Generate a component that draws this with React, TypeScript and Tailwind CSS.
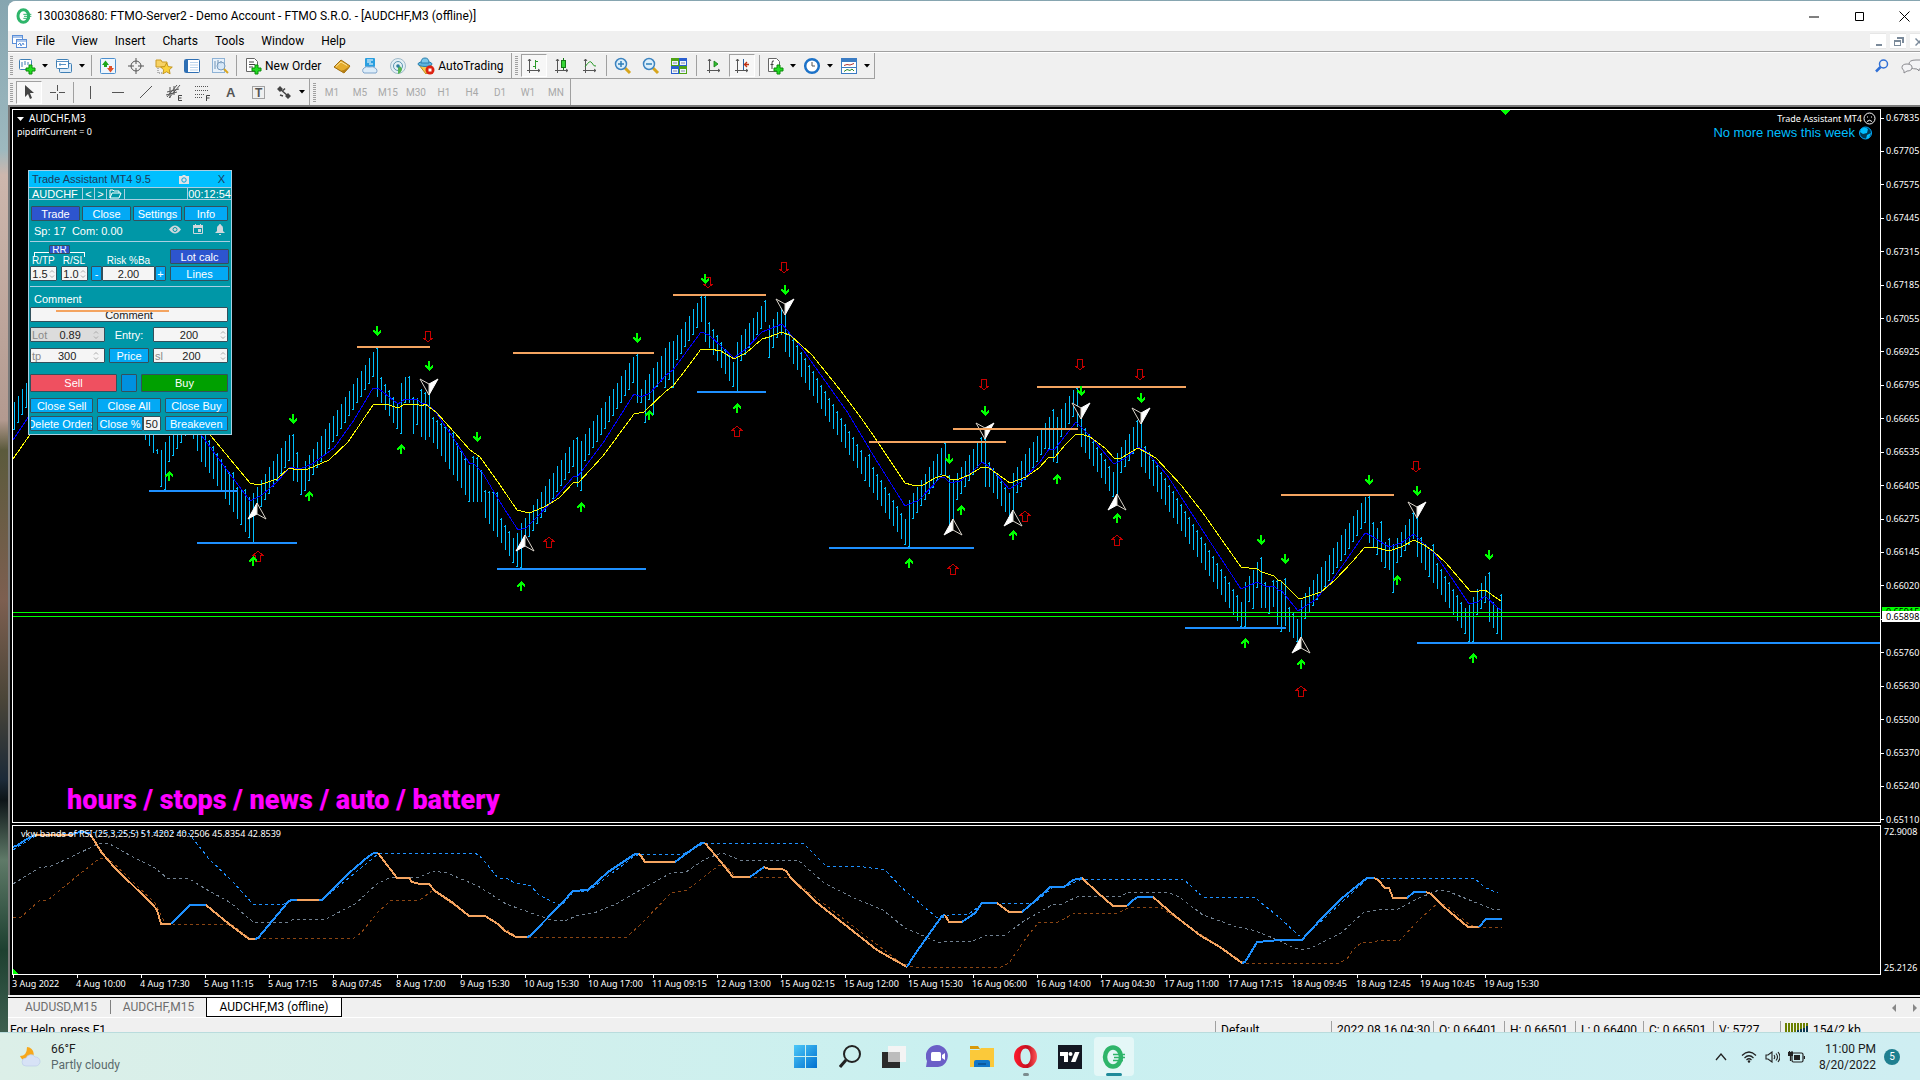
import React from "react";

type Bar = [number, number, number];
type Pt = [number, number];

// Bars are 4px apart; entries in between are interpolated.
const BARS: Bar[] = [
  [14, 402, 430], [26, 383, 408], [78, 300, 326], [134, 392, 418], [145, 415, 440], [149, 421, 446], [153, 427, 453], [157, 449, 454], [161, 450, 487], [165, 442, 490], [169, 436, 462], [177, 423, 449], [185, 410, 436],
  [189, 410, 432], [193, 413, 439], [201, 425, 462], [205, 430, 467], [209, 440, 473], [229, 472, 505], [233, 472, 512], [237, 487, 519], [241, 490, 525], [245, 489, 532], [249, 497, 538], [253, 493, 543], [257, 487, 514], [261, 480, 507],
  [289, 435, 461], [293, 434, 481], [297, 452, 482], [301, 470, 495], [305, 461, 491], [309, 455, 481], [373, 352, 377], [377, 347, 397], [381, 377, 403], [397, 403, 429], [401, 383, 434], [405, 377, 403], [409, 376, 403],
  [413, 397, 434], [417, 398, 425], [421, 389, 437], [425, 392, 440], [429, 393, 437], [433, 417, 443], [453, 432, 475], [457, 443, 481], [469, 465, 502], [473, 456, 502], [477, 457, 502], [481, 470, 502], [485, 490, 518], [497, 492, 537], [501, 518, 543],
  [513, 538, 563], [517, 533, 567], [521, 523, 568], [525, 518, 544], [529, 512, 537], [573, 440, 467], [577, 437, 487], [581, 441, 491], [585, 434, 461], [633, 357, 383], [637, 354, 403], [641, 389, 403], [645, 380, 423],
  [649, 374, 400], [653, 368, 415], [657, 362, 387], [661, 356, 382], [665, 348, 388], [669, 342, 380], [673, 341, 388], [677, 335, 360], [701, 296, 322], [705, 296, 342], [709, 322, 348], [733, 362, 387], [737, 342, 392], [741, 335, 361],
  [765, 300, 322], [769, 325, 358], [773, 319, 348], [777, 312, 338], [781, 306, 335], [785, 306, 352], [789, 332, 357], [865, 457, 481], [869, 454, 487], [873, 467, 493], [905, 519, 545], [909, 500, 547], [913, 493, 519],
  [941, 448, 475], [945, 442, 475], [949, 475, 527], [953, 480, 527], [957, 473, 500], [981, 437, 462], [985, 438, 487], [989, 462, 487], [1009, 493, 518], [1013, 473, 517], [1017, 467, 493], [1045, 423, 449], [1049, 417, 449],
  [1053, 409, 462], [1057, 417, 463], [1061, 409, 437], [1073, 390, 417], [1077, 387, 427], [1081, 417, 447], [1085, 428, 453], [1113, 472, 497], [1117, 453, 497], [1121, 447, 473], [1137, 420, 448], [1141, 420, 467], [1145, 446, 473],
  [1237, 595, 621], [1241, 602, 627], [1245, 582, 627], [1249, 576, 602], [1253, 570, 609], [1257, 562, 588], [1261, 557, 608], [1265, 582, 608], [1269, 587, 614], [1273, 580, 607], [1277, 580, 625], [1281, 581, 632],
  [1285, 578, 626], [1289, 607, 632], [1293, 613, 638], [1297, 619, 642], [1301, 600, 640], [1305, 593, 619], [1365, 497, 523], [1369, 496, 543], [1373, 522, 548], [1377, 528, 555], [1381, 521, 562], [1385, 542, 568],
  [1389, 538, 570], [1393, 544, 593], [1397, 538, 563], [1413, 512, 539], [1417, 517, 557], [1421, 537, 563], [1429, 550, 577], [1433, 544, 583], [1437, 563, 589], [1465, 608, 634], [1469, 605, 642], [1473, 597, 642],
  [1477, 589, 615], [1485, 576, 603], [1489, 572, 622], [1493, 602, 628], [1497, 608, 634], [1501, 594, 640],
];

const YELLOW_A = "13,459 29,436 80,350 170,380";
const YELLOW = "190,412 211,436 250,483 254,484 262,484 277,479 289,468 298,470 308,469 329,460 348,442 373,405 386,404 398,408 405,404 416,404 422,406 425,404 436,412 454,432 470,450 480,457 500,485 517,510 525,512 532,512 546,506 559,498 574,482 578,483 603,456 634,414 644,412 666,391 673,386 687,368 701,349 710,349 721,351 734,359 746,353 762,339 769,337 782,332 791,336 812,355 837,386 859,415 873,435 891,462 905,483 912,485 923,485 935,478 945,475 950,479 959,479 969,475 982,467 989,468 1010,483 1026,477 1039,468 1049,457 1055,457 1065,445 1076,434 1081,434 1090,437 1105,448 1114,458 1121,458 1138,448 1156,458 1181,485 1203,513 1224,543 1241,567 1257,569 1262,572 1274,576 1278,580 1281,581 1298,598 1303,598 1321,592 1335,580 1353,561 1365,547 1374,547 1389,551 1401,547 1414,540 1424,545 1433,551 1446,563 1470,591 1474,592 1485,590 1498,599 1501,601";
const BLUE_A = "13,440 29,416 80,330 150,370";
const BLUE = "185,412 202,436 221,462 250,501 262,495 277,482 290,467 300,469 312,464 334,448 354,420 373,388 379,389 398,404 405,399 417,399 421,403 425,403 434,410 450,433 470,464 473,463 482,472 500,502 518,530 526,528 537,517 555,498 574,476 578,476 603,443 634,394 641,397 650,393 666,375 673,370 701,332 709,335 734,358 746,349 762,332 782,324 801,347 823,378 848,413 873,455 905,506 919,500 941,477 944,477 950,483 960,481 971,473 982,462 991,468 1009,489 1021,482 1040,462 1049,449 1054,450 1076,422 1089,435 1114,464 1126,458 1138,447 1146,451 1167,475 1203,531 1241,589 1257,582 1265,586 1274,586 1278,590 1281,590 1298,611 1315,600 1331,582 1365,533 1370,535 1389,547 1401,543 1414,534 1422,542 1435,554 1453,580 1469,604 1478,602 1485,596 1498,608 1501,610";

const HIGHS: [number, number, number][] = [[357, 430, 347], [513, 654, 353], [673, 766, 295], [869, 1006, 442], [953, 1078, 429], [1037, 1186, 387], [1281, 1394, 495]];
const LOWS: [number, number, number][] = [[149, 238, 491], [197, 297, 543], [497, 646, 569], [697, 766, 392], [829, 974, 548], [1185, 1286, 628], [1417, 2600, 643]];

const GREEN_DOWN: Pt[] = [[293, 419], [377, 331], [429, 366], [477, 437], [637, 338], [705, 279], [785, 290], [949, 459], [985, 411], [1081, 391], [1141, 398], [1261, 540], [1285, 559], [1369, 480], [1417, 491], [1489, 555]];
const GREEN_UP: Pt[] = [[169, 476], [309, 496], [253, 561], [401, 449], [521, 586], [581, 507], [649, 415], [737, 408], [909, 563], [961, 510], [1013, 535], [1057, 479], [1117, 518], [1397, 580], [1245, 643], [1301, 664], [1473, 658]];
const RED_DOWN: Pt[] = [[428, 337], [708, 283], [784, 268], [984, 385], [1080, 365], [1140, 375], [1416, 467]];
const RED_UP: Pt[] = [[258, 556], [549, 542], [737, 431], [953, 569], [1025, 516], [1117, 540], [1301, 691]];
const NAV_DOWN: Pt[] = [[429, 387], [785, 307], [985, 431], [1081, 411], [1141, 416], [1417, 510]];
const NAV_UP: Pt[] = [[257, 511], [525, 543], [953, 527], [1013, 518], [1117, 502], [1301, 645]];

const RSI: [string, string][] = [
  ["b", "13,847 18,845 25,840 35,835"], ["o", "35,835 73,835"], ["b", "73,834 80,832 90,833"],
  ["o", "90,834 102,853 114,867 153,905 157,910 161,924 171,924"], ["b", "171,924 190,905 206,905"],
  ["o", "206,905 229,924 249,939 255,939"], ["b", "255,939 258,938 288,902 291,900 297,900"], ["o", "297,900 319,900"],
  ["b", "319,900 322,900 349,873 369,856 374,853 378,853"],
  ["o", "378,853 397,878 409,878 412,882 420,884 429,884 435,891 453,903 469,916 485,916 498,924 505,931 516,937 527,937"],
  ["b", "527,937 530,936 561,904 573,891 588,890 608,872 635,854 639,854"], ["o", "639,854 641,856 645,862 675,862"],
  ["b", "675,862 683,856 701,843 705,843"], ["o", "705,843 716,856 733,877 750,877"], ["b", "750,877 764,867"],
  ["o", "764,867 769,869 782,869 786,871 791,878 816,902 844,924 877,950 907,967"], ["b", "907,967 913,957 932,930 942,916 945,915"],
  ["o", "945,915 949,922 962,922"], ["b", "962,922 975,913 982,903 997,903"], ["o", "997,903 1009,912 1022,912"],
  ["b", "1022,912 1036,900 1050,887 1064,887 1073,880 1082,878"], ["o", "1082,878 1097,892 1113,906 1127,906"],
  ["b", "1127,906 1133,900 1138,897 1153,897"], ["o", "1153,897 1175,916 1201,936 1220,947 1242,963"],
  ["b", "1242,963 1245,962 1250,954 1257,942 1280,940 1302,940 1307,934 1325,915 1341,899 1358,885 1367,878 1374,878"],
  ["o", "1374,878 1378,880 1385,888 1389,888 1393,898 1407,898"], ["b", "1407,898 1414,892 1426,892"],
  ["o", "1426,892 1431,894 1443,906 1456,917 1468,927 1479,927"], ["b", "1479,927 1486,919 1502,919"],
];
const BAND_UP = "13,850 35,836 90,832 188,832 194,840 209,859 233,882 253,904 282,905 291,901 322,900 378,854 475,853 482,858 498,878 506,878 515,883 531,886 539,895 561,906 573,892 588,891 635,856 640,854 683,854 705,843 803,843 826,866 864,867 885,870 901,887 936,917 944,918 949,915 969,914 983,903 1034,903 1052,888 1064,887 1082,879 1183,879 1203,897 1254,897 1280,918 1298,935 1303,938 1368,878 1474,878 1484,887 1498,893";
const BAND_MID = "13,884 39,868 51,866 67,859 100,843 108,843 131,856 155,868 167,878 188,878 204,888 231,903 253,922 288,922 294,919 326,919 355,904 378,883 392,877 420,877 433,871 447,873 478,886 506,904 551,920 565,921 576,916 594,913 616,904 642,889 671,873 686,872 705,859 722,853 740,860 798,860 824,883 856,899 883,910 905,928 940,943 948,941 973,941 987,935 1005,935 1024,921 1052,905 1062,904 1079,896 1122,896 1128,892 1167,892 1179,897 1203,915 1234,926 1256,931 1280,941 1292,947 1302,950 1311,948 1341,933 1364,912 1378,910 1398,909 1419,898 1439,890 1447,891 1492,909 1502,909";
const BAND_LOW = "13,917 21,917 39,901 48,900 76,877 100,858 108,858 155,903 165,923 173,924 231,924 249,938 353,939 361,933 378,912 390,901 420,900 433,890 469,916 485,916 518,937 627,937 642,923 671,893 687,890 718,866 724,864 736,877 789,877 901,963 913,967 1001,967 1009,963 1026,938 1038,923 1058,922 1075,913 1118,913 1130,907 1160,907 1244,963 1339,963 1347,959 1353,950 1362,942 1374,942 1380,940 1400,940 1419,920 1439,902 1447,906 1470,925 1476,927 1502,927";

function barPath(): string {
  let d = "";
  for (let i = 0; i < BARS.length; i++) {
    const [x0, t0, b0] = BARS[i];
    const next = BARS[i + 1];
    const steps = next ? Math.max(1, Math.round((next[0] - x0) / 4)) : 1;
    const rising = next ? next[1] < t0 : false;
    for (let s = 0; s < steps; s++) {
      const k = s / steps;
      const x = Math.round(x0 + (next ? (next[0] - x0) * k : 0));
      const t = Math.round(t0 + (next ? (next[1] - t0) * k : 0));
      const b = Math.round(b0 + (next ? (next[2] - b0) * k : 0));
      d += `M${x}.5 ${t}V${b}M${x - 1} ${(rising ? b - 1 : t + 1)}.5h1`;
    }
  }
  return d;
}

// An empty entry leaves its place to the current-price tags.
const PRICES = ["0.67835", "0.67705", "0.67575", "0.67445", "0.67315", "0.67185", "0.67055", "0.66925", "0.66795", "0.66665", "0.66535", "0.66405", "0.66275", "0.66145", "0.66020", "", "0.65760", "0.65630", "0.65500", "0.65370", "0.65240", "0.65110"];
const DATES = ["3 Aug 2022", "4 Aug 10:00", "4 Aug 17:30", "5 Aug 11:15", "5 Aug 17:15", "8 Aug 07:45", "8 Aug 17:00", "9 Aug 15:30", "10 Aug 15:30", "10 Aug 17:00", "11 Aug 09:15", "12 Aug 13:00", "15 Aug 02:15", "15 Aug 12:00", "15 Aug 15:30", "16 Aug 06:00", "16 Aug 14:00", "17 Aug 04:30", "17 Aug 11:00", "17 Aug 17:15", "18 Aug 09:45", "18 Aug 12:45", "19 Aug 10:45", "19 Aug 15:30"];

function MainPlot() {
  return (
    <svg className="absolute inset-0 h-full w-full" shapeRendering="crispEdges" aria-label="AUDCHF price chart">
      <defs>
        <path id="gup" d="M0 -5L4 -1V1H3L1 -1V5H-1V-1L-3 1H-4V-1Z" fill="#0f0" />
        <path id="rup" d="M0 -5L4.500 -1H2.500V5.500H-2.500V-1H-4.500Z" fill="none" stroke="#c80000" strokeWidth="1" />
        <g id="nav" shapeRendering="auto">
          <path d="M0 -8L-9 8L0 3Z" fill="#fff" stroke="#fff" strokeWidth="1" />
          <path d="M0 -8L9 8L0 3Z" fill="#000" stroke="#dcd6cc" strokeWidth="1" />
        </g>
      </defs>
      <g transform="translate(-13 -110)">
        <path d={barPath()} stroke="#00bfff" strokeWidth="1" fill="none" />
        {[BLUE_A, BLUE].map((p) => <polyline key={p} points={p} stroke="#0000ff" fill="none" />)}
        {[YELLOW_A, YELLOW].map((p) => <polyline key={p} points={p} stroke="#ffff00" fill="none" />)}
        <path d="M13 612.500H2600M13 616.500H2600" stroke="#00ff00" />
        {HIGHS.map(([a, b, y]) => <path key={a} d={`M${a} ${y}H${b}`} stroke="#f4a460" strokeWidth="2" />)}
        {LOWS.map(([a, b, y]) => <path key={a} d={`M${a} ${y}H${b}`} stroke="#1e90ff" strokeWidth="2" />)}
        {RED_UP.map(([x, y]) => <use key={x} href="#rup" x={x} y={y} />)}
        {RED_DOWN.map(([x, y]) => <use key={x} href="#rup" transform={`translate(${x} ${y}) rotate(180)`} />)}
        {NAV_UP.map(([x, y]) => <use key={x} href="#nav" x={x} y={y} />)}
        {NAV_DOWN.map(([x, y]) => <use key={x} href="#nav" transform={`translate(${x} ${y}) rotate(180)`} />)}
        {GREEN_UP.map(([x, y]) => <use key={x} href="#gup" x={x} y={y} />)}
        {GREEN_DOWN.map(([x, y]) => <use key={x} href="#gup" transform={`translate(${x} ${y}) rotate(180)`} />)}
        <path d="M953 429H1078" stroke="#f4a460" strokeWidth="2" />
        <path d="M1500 110h10l-5 5z" fill="#0f0" />
      </g>
    </svg>
  );
}

function RsiPlot() {
  return (
    <svg className="absolute inset-0 h-full w-full" shapeRendering="crispEdges" aria-label="RSI bands">
      <g transform="translate(-13 -826)" fill="none">
        <polyline points={BAND_UP} stroke="#1e90ff" strokeDasharray="3 3" />
        <polyline points={BAND_MID} stroke="#708090" strokeDasharray="3 3" />
        <polyline points={BAND_LOW} stroke="#8b4513" strokeDasharray="3 3" />
        {RSI.map(([c, p]) => <polyline key={p} points={p} strokeWidth="2" stroke={c === "b" ? "#1e90ff" : "#f4a460"} />)}
        <path d="M13 969v5h5z" fill="#0f0" />
      </g>
    </svg>
  );
}

const Svg = ({ children, w = 18, h = 18 }: { children: React.ReactNode; w?: number; h?: number }) => (
  <svg width={w} height={h} viewBox={`0 0 ${w} ${h}`} fill="none" aria-hidden="true" className="shrink-0">{children}</svg>
);

const Plus = () => <path d="M9.500 6.500h3v3h3v3h-3v3h-3v-3h-3v-3h3z" fill="#22dd22" stroke="#0a8a0a" transform="translate(1.500 1.500)" />;
const Axes = () => <path d="M4.500 2v14M2 13.500h13M3 4l1.500-2L6 4M13 12l2 1.500-2 1.500" stroke="#555" />;

const IC: Record<string, React.ReactNode> = {
  newchart: <Svg><rect x="1.500" y="2.500" width="12" height="10" rx="1" fill="#fff" stroke="#3f7fb5" /><path d="M4 5v5M7 4v4M10 5v3" stroke="#3f7fb5" /><Plus /></Svg>,
  profiles: <Svg><rect x="4.500" y="6.500" width="12" height="9" rx="1" fill="#dcebf8" stroke="#3f7fb5" /><rect x="1.500" y="2.500" width="12" height="9" rx="1" fill="#fff" stroke="#3f7fb5" /><path d="M2 4.500h11M4 7.500h7M5 6v3" stroke="#5b93c5" /></Svg>,
  market: <Svg><rect x="1.500" y="1.500" width="15" height="15" rx="1" fill="#eef6fd" stroke="#4c8fce" /><path d="M3 8l3.500-4.500L10 8H8v2H5V8z" fill="#1ca81c" /><path d="M8 11l3.500 4.500L15 11h-2V9h-3v2z" fill="#e0502a" /></Svg>,
  cross: <Svg><circle cx="9" cy="9" r="5" stroke="#555" /><path d="M9 1v6M9 11v6M1 9h6M11 9h6" stroke="#555" /></Svg>,
  navigator: <Svg><path d="M1 3h5l1 2h5v5H1z" fill="#f7d264" stroke="#c99a22" /><path d="M3 11v5h5" stroke="#777" strokeDasharray="1 1" /><path d="M11.500 6l1.800 3.600 4 .5-3 2.700.8 4-3.600-2-3.600 2 .8-4-3-2.700 4-.5z" fill="#fbd23c" stroke="#b8860b" strokeWidth=".8" /></Svg>,
  terminal: <Svg><rect x="1.500" y="2.500" width="15" height="13" rx="1" fill="#fff" stroke="#2f6fb3" /><path d="M2 3h3v12H2z" fill="#2f6fb3" /><path d="M7 5.500h8M7 8h8M7 10.500h8M7 13h8" stroke="#b9d3ec" /></Svg>,
  tester: <Svg><rect x="1.500" y="1.500" width="12" height="14" fill="#e8f1fa" stroke="#8fb3d6" /><path d="M4 4v8M7 3v7M10 4v3" stroke="#6f93b5" /><circle cx="10" cy="9" r="4" fill="#cfe4f7aa" stroke="#7a9cbd" /><path d="M13 12l4 4" stroke="#d9a520" strokeWidth="2" /></Svg>,
  order: <Svg><path d="M2.500 1.500h8l3 3v10h-11z" fill="#fff" stroke="#666" /><path d="M5 5h5M5 7.500h6M5 10h4" stroke="#444" /><Plus /></Svg>,
  gold: <Svg><path d="M1 10L8 3l9 6-6 7z" fill="#e5ac2c" stroke="#9c6b10" /><path d="M1 10l6 4 4-1 6-4-1 2-5 5z" fill="#b57f16" /><path d="M3 9.500L8 5l6 3.500" stroke="#fbe39a" /></Svg>,
  community: <Svg><rect x="4" y="1" width="10" height="9" rx="1" fill="#2a9fe0" /><path d="M6 3h6M6 5h4M8 7h4" stroke="#fff" /><path d="M3 16a3 3 0 010-5q2-2 5-1 5-1 6 1a3 3 0 011 5z" fill="#dcecf9" stroke="#7fa5cc" /></Svg>,
  signal: <Svg><circle cx="9" cy="9" r="7.500" stroke="#9fb9c9" fill="#e4f0f5" /><circle cx="9" cy="9" r="4.500" stroke="#5b94b0" /><path d="M9 9a4 4 0 014 4q-1 3-4 4z" fill="#55b555" /><circle cx="9" cy="9" r="1.800" fill="#2f7f9f" /></Svg>,
  auto: <Svg><path d="M2 8l7 9 6-8z" fill="#f5c84c" stroke="#bf8f1a" /><ellipse cx="8" cy="7" rx="7" ry="2.500" fill="#5db3dd" stroke="#2a7fae" /><path d="M4 6q0-5 4-5t4 5z" fill="#7cc7ea" stroke="#2a7fae" /><circle cx="13" cy="13" r="4.500" fill="#dd2211" /><rect x="11.500" y="11.500" width="3" height="3" fill="#fff" /></Svg>,
  bars: <Svg><Axes /><path d="M10.500 3v9M8 9.500h2M11 4.500h2" stroke="#2a9a2a" /></Svg>,
  candles: <Svg><Axes /><path d="M10.500 1v12" stroke="#157a15" /><rect x="8.500" y="3.500" width="4" height="7" fill="#35d435" stroke="#157a15" /></Svg>,
  line: <Svg><Axes /><path d="M4 10q5-8 7-4t4 3" stroke="#2a9a2a" /></Svg>,
  zin: <Svg><path d="M11 11l5 5" stroke="#d7a51d" strokeWidth="3" /><circle cx="7" cy="7" r="5.500" fill="#dceffb" stroke="#3d84c0" strokeWidth="1.500" /><path d="M4 7h6M7 4v6" stroke="#2f7fb8" strokeWidth="1.500" /></Svg>,
  zout: <Svg><path d="M11 11l5 5" stroke="#d7a51d" strokeWidth="3" /><circle cx="7" cy="7" r="5.500" fill="#dceffb" stroke="#3d84c0" strokeWidth="1.500" /><path d="M4 7h6" stroke="#2f7fb8" strokeWidth="1.500" /></Svg>,
  tile: <Svg><path d="M1 1h8v8H1zM9 9h8v8H9z" fill="#4fa314" /><path d="M9 1h8v8H9zM1 9h8v8H1z" fill="#2a5fd0" /><path d="M2 4h6v4H2zM10 4h6v4h-6zM2 12h6v4H2zM10 12h6v4h-6z" fill="#eef5fb" /><path d="M3 6h4M11 6h4M3 14h4M11 14h4" stroke="#88a" /></Svg>,
  scroll: <Svg><Axes /><path d="M9 4l4 3-4 3z" fill="#2fbf2f" stroke="#157a15" strokeWidth=".8" /></Svg>,
  shift: <Svg><Axes /><path d="M10.500 2v11" stroke="#2a5f9f" /><path d="M16 7.500h-4M14 5l-2.500 2.500L14 10" stroke="#c03010" strokeWidth="1.300" /></Svg>,
  indic: <Svg><path d="M2.500 1.500h8l3 3v10h-11z" fill="#fff" stroke="#666" /><path d="M8 4q-2-1-2 2v6M4.500 7.500h3" stroke="#444" /><Plus /></Svg>,
  clock: <Svg><circle cx="9" cy="9" r="6.800" fill="#fff" stroke="#1c72c8" strokeWidth="2.500" /><path d="M9 5v4h3" stroke="#555" /></Svg>,
  tmpl: <Svg><rect x="1.500" y="1.500" width="15" height="15" fill="#fff" stroke="#3b7cc4" /><path d="M2 2h14v3H2z" fill="#3b7cc4" /><path d="M2 10.500h14" stroke="#3b7cc4" /><path d="M4 8.500l3-1 3 .5 4-1.500" stroke="#a33" /><path d="M4 14.500l3-2 3 1 2-1.500 2 2" stroke="#2a8a2a" /></Svg>,
  cursor: <Svg><path d="M5 2v12l3-3 2 5 2-1-2-5h4z" fill="#444" /></Svg>,
  cross2: <Svg><path d="M9.500 2v6M9.500 11v6M2 9.500h6M11 9.500h6" stroke="#555" /></Svg>,
  vline: <Svg><path d="M9.500 3v13" stroke="#555" /></Svg>,
  hline: <Svg><path d="M3 9.500h12" stroke="#555" /></Svg>,
  trend: <Svg><path d="M3 15L15 3" stroke="#555" /></Svg>,
  chan: <Svg><path d="M2 14L12 2M4 15L15 2M2 9l12-3M1 12l11-3M5 4v11M9 3v9" stroke="#555" /><path d="M17 12.500h-3.500v5H17M13.500 15H16.500" stroke="#444" /></Svg>,
  fibo: <Svg><path d="M2 3.500h13M2 7.500h13M2 11.500h9M2 14.500h8" stroke="#555" strokeDasharray="1 1" /><path d="M17 12.500h-3.500V18M13.500 15H16.500" stroke="#444" /></Svg>,
  texta: <Svg><text x="5" y="14" fontSize="13" fontFamily="Liberation Sans" fontWeight="bold" fill="#555">A</text></Svg>,
  label: <Svg><rect x="3.500" y="3.500" width="12" height="12" stroke="#555" strokeDasharray="1 1" /><text x="6" y="14" fontSize="12" fontFamily="Liberation Sans" fontWeight="bold" fill="#555">T</text></Svg>,
  shapes: <Svg><path d="M5 3l3 3-3 3-3-3zM13 10l3 3-3 3-3-3z" fill="#444" /><path d="M5 6l8 7M8 13l-3-1M10 5.500l-2 2" stroke="#444" strokeWidth="1.500" /></Svg>,
};

function Tool({ icon, name, drop, active, text }: { icon: string; name: string; drop?: boolean; active?: boolean; text?: string }) {
  return (
    <button
      aria-label={name}
      className={
        "flex h-[23px] shrink-0 items-center justify-center " +
        (text ? "gap-[3px] pl-[5px] pr-[7px] font-['Roboto',sans-serif] text-[12px] leading-4 text-black " : drop ? "w-[37px] gap-0.5 " : active ? "w-[26px] border border-[#a0a0a0] border-r-white border-b-white bg-[#f7f7f7] mx-px " : "w-7 ")
      }
    >
      {IC[icon]}
      {text}
      {drop && <svg width="7" height="4" aria-hidden="true" className="ml-1"><path d="M0 0h6L3 3.500z" /></svg>}
    </button>
  );
}
const Sep = ({ wide }: { wide?: boolean }) => <div className={(wide ? "mx-[3px]" : "mx-[2px]") + " h-[21px] w-px shrink-0 bg-[#a0a0a0]"} />;
const Grip = () => <div className="mx-[2px] h-[19px] w-[3px] shrink-0 bg-[repeating-linear-gradient(#a0a0a0_0_1px,#f0f0f0_1px_2px)]" />;

const PB = "flex items-center justify-center overflow-hidden whitespace-nowrap rounded-[1px] border border-[#33505c] text-white";

function Field({ label, value, className, tag, spin = true, gray }: { label: string; value: string; className: string; tag?: string; spin?: boolean; gray?: boolean }) {
  return (
    <label className={"flex h-[15px] items-center rounded-[1px] border border-[#33505c] " + (gray ? "bg-[#dcdcdc] " : "bg-[#f5f5f5] ") + className}>
      {tag && <span className="pl-px text-[#8a8a8a]">{tag}</span>}
      <input aria-label={label} defaultValue={value} className="w-0 min-w-0 flex-1 bg-transparent text-center text-[#222] outline-none" />
      {spin && <svg width="6" height="10" viewBox="0 0 6 10" fill="none" stroke="#aaa" className="mr-px shrink-0" aria-hidden="true"><path d="M1 3.500L3 1.500l2 2M1 6.500l2 2 2-2" /></svg>}
    </label>
  );
}

function TradePanel() {
  return (
    <section className="absolute left-[15px] top-[60px] flex w-[204px] flex-col border border-[#a9cfe2] bg-[#0097a7] font-['Liberation_Sans',Arial,sans-serif] text-[11px] leading-[12px] text-white">
      <header className="flex h-4 items-center bg-[#00bfff] pl-[3px] pr-[6px] text-[#1c3a5a]">
        <h2>Trade Assistant MT4 9.5</h2>
        <svg width="10" height="9" viewBox="0 0 10 9" className="ml-auto mr-[29px]" aria-hidden="true"><path d="M0 1h3l1-1h2l1 1h3v8H0z" fill="#dfe3e6" /><circle cx="5" cy="5" r="2.200" fill="#dfe3e6" stroke="#00a5e0" /></svg>
        <button aria-label="Close panel">X</button>
      </header>
      <div className="flex h-[13px] items-center border-y border-[#a9cfe2]">
        <span className="w-[53px] pl-[3px]">AUDCHF</span>
        <button className="w-3 border-l border-[#a9cfe2]">&lt;</button>
        <button className="w-3 border-l border-[#a9cfe2]">&gt;</button>
        <button aria-label="Open" className="flex w-[19px] justify-center border-x border-[#a9cfe2]"><svg width="13" height="10" viewBox="0 0 13 10" fill="none" stroke="#fff" aria-hidden="true"><path d="M1 9V1h3l1 1h5v2M1 9l2-5h9L10 9z" /></svg></button>
        <span className="ml-auto border-l border-[#a9cfe2]">00:12:54</span>
      </div>
      <div className="mt-1.5 flex gap-[2px] pl-[2px] pr-[3px]">
        <button className={PB + " h-[15px] flex-1 bg-[#2d55cf]"}>Trade</button>
        <button className={PB + " h-[15px] flex-1 bg-[#03a9f4]"}>Close</button>
        <button className={PB + " h-[15px] flex-1 bg-[#03a9f4]"}>Settings</button>
        <button className={PB + " h-[15px] w-11 bg-[#03a9f4]"}>Info</button>
      </div>
      <div className="mx-px flex h-[21px] items-center border-b border-[#a9cfe2] px-1">
        <span className="whitespace-pre">Sp: 17  Com: 0.00</span>
        <span className="ml-auto mb-1 flex items-center gap-3 pr-px">
          <svg width="12" height="9" viewBox="0 0 12 9" aria-hidden="true"><path d="M0 4.500Q6-3.500 12 4.500 6 12.500 0 4.500z" fill="#cfd8dc" /><circle cx="6" cy="4.500" r="2" fill="#cfd8dc" stroke="#0097a7" /></svg>
          <svg width="10" height="10" viewBox="0 0 10 10" aria-hidden="true"><path d="M.500 1.500h9v8h-9z" fill="none" stroke="#cfd8dc" /><path d="M0 1h10v3H0zM2 0h1v2H2zM7 0h1v2H7zM5 5h3v3H5z" fill="#cfd8dc" /></svg>
          <svg width="10" height="11" viewBox="0 0 10 11" aria-hidden="true"><path d="M5 0q1 0 1 1 2 1 2 3v3l2 2H0l2-2V4q0-2 2-3 0-1 1-1zM4 10h2v1H4z" fill="#cfd8dc" /></svg>
        </span>
      </div>
      <div className="mx-px flex h-[45px] border-b border-[#a9cfe2] pr-px pt-[3px]">
        <div className="w-[59px] shrink-0">
          <div className="mx-1 flex h-[9px] items-center">
            <i className="mt-[9px] h-[5px] flex-1 border-l border-t border-white" />
            <button className="h-[9px] overflow-hidden rounded-[1px] border border-[#33505c] bg-[#2d55cf] px-[2px] text-[10px] leading-[8px]">RR</button>
            <i className="mt-[9px] h-[5px] flex-1 border-r border-t border-white" />
          </div>
          <div className="flex h-3 justify-between pl-[2px] pr-1 pt-px text-[10px] leading-[11px]"><span>R/TP</span><span>R/SL</span></div>
          <div className="flex gap-1"><Field label="R/TP" value="1.5" className="w-[27px]" /><Field label="R/SL" value="1.0" className="w-[27px]" /></div>
        </div>
        <div className="ml-[2px] flex w-[75px] flex-col justify-end pb-[5px] text-[10px]">
          <span className="h-3 pt-px text-center leading-[11px]">Risk %Ba</span>
          <div className="flex text-[11px]">
            <button className={PB + " h-[15px] w-[11px] bg-[#03a9f4]"}>-</button>
            <Field label="Risk" value="2.00" spin={false} className="min-w-0 flex-1" />
            <button className={PB + " h-[15px] w-[11px] bg-[#03a9f4]"}>+</button>
          </div>
        </div>
        <div className="ml-1 flex flex-1 flex-col gap-[2px] pt-1">
          <button className={PB + " h-[15px] bg-[#2d55cf]"}>Lot calc</button>
          <button className={PB + " h-[15px] bg-[#03a9f4]"}>Lines</button>
        </div>
      </div>
      <div className="flex flex-col pb-[3px] pl-px pr-[3px] pt-1.5">
        <span className="h-[14px] pl-1 text-[11px]">Comment</span>
        <div className="relative flex">
          <Field label="Comment" value="Comment" spin={false} className="flex-1" />
          <i className="absolute left-[26px] top-[3px] h-[2px] w-[113px] bg-[#f4a460]" />
        </div>
        <div className="mt-[5px] grid grid-cols-[75px_1fr_75px] items-center gap-x-1 gap-y-1.5">
          <Field label="Lot" tag="Lot" value="0.89" gray className="pr-1" />
          <span className="text-center">Entry:</span>
          <Field label="Entry" value="200" className="pl-1" />
          <Field label="Take profit" tag="tp" value="300" className="pr-1" />
          <button className={PB + " h-[15px] bg-[#03a9f4]"}>Price</button>
          <Field label="Stop loss" tag="sl" value="200" className="" />
        </div>
        <div className="mt-[11px] flex gap-1">
          <button className={PB + " h-[18px] flex-1 bg-[#ef5060]"}>Sell</button>
          <button aria-label="Pending order" className={PB + " h-[18px] w-4 bg-[#0091e0]"} />
          <button className={PB + " h-[18px] flex-1 bg-[#00a000]"}>Buy</button>
        </div>
        <div className="mt-1.5 grid grid-cols-3 gap-x-1 gap-y-[3px]">
          <button className={PB + " h-[15px] bg-[#03a9f4]"}>Close Sell</button>
          <button className={PB + " h-[15px] bg-[#03a9f4]"}>Close All</button>
          <button className={PB + " h-[15px] bg-[#03a9f4]"}>Close Buy</button>
          <button className={PB + " h-[15px] bg-[#03a9f4]"}>Delete Orders</button>
          <div className="flex">
            <button className={PB + " h-[15px] flex-1 bg-[#03a9f4]"}>Close %</button>
            <Field label="Close percent" value="50" spin={false} className="w-[18px]" />
          </div>
          <button className={PB + " h-[15px] bg-[#03a9f4]"}>Breakeven</button>
        </div>
      </div>
    </section>
  );
}

const FtmoIcon = ({ s }: { s: number }) => (
  <svg width={s} height={s} viewBox="0 0 24 24" fill="none" aria-hidden="true">
    <ellipse cx="11" cy="12" rx="8" ry="9.500" stroke="#2eb56a" strokeWidth="4.500" />
    <path d="M11 9.500h12M12 12.500h11M11 15.500h10" stroke="#2eb56a" strokeWidth="1.500" />
    <path d="M19 7v10" stroke="#2eb56a" strokeWidth="2" />
  </svg>
);

function Taskbar() {
  const cell = "relative flex h-[39px] w-10 items-center justify-center rounded";
  return (
    <footer className="relative z-10 flex h-12 shrink-0 items-center border-t border-[#b9dcdd] bg-linear-to-r from-[#dcefe8] via-[#c9f0f0] to-[#cfeef2] font-['Roboto','Open_Sans',sans-serif] text-[12px] leading-4 text-[#1b1b1b]">
      <div className="flex flex-1 items-center gap-2.5 pl-[19px]">
        <svg width="22" height="22" viewBox="0 0 22 22" aria-hidden="true">
          <path d="M8 1a7 7 0 11-7 9q7 0 7-9z" fill="#f7a81b" />
          <path d="M7 20a4 4 0 010-8 5 5 0 019-1 4.500 4.500 0 011 9z" fill="#d7e2f6" stroke="#b8c9ea" strokeWidth=".6" />
        </svg>
        <p>66°F<br /><span className="text-[#5a6a6c]">Partly cloudy</span></p>
      </div>
      <nav className="flex gap-1">
        <button aria-label="Start" className={cell}><svg width="23" height="23" viewBox="0 0 23 23"><defs><linearGradient id="w" x2="1" y2="1"><stop stopColor="#4cc8f8" /><stop offset="1" stopColor="#0070d0" /></linearGradient></defs><path d="M0 0h11v11H0zM12 0h11v11H12zM0 12h11v11H0zM12 12h11v11H12z" fill="url(#w)" /></svg></button>
        <button aria-label="Search" className={cell}><svg width="22" height="23" viewBox="0 0 22 23" fill="none" stroke="#222" strokeWidth="2"><circle cx="13" cy="9" r="8" /><path d="M7 15l-6 7" strokeWidth="3" /></svg></button>
        <button aria-label="Task view" className={cell}><svg width="24" height="22" viewBox="0 0 24 22"><path d="M0 6h18v16H0z" fill="#2b2b2b" /><path d="M6 0h18v16H6z" fill="#f4f4f4" /><path d="M6 6h12v10H6z" fill="#bdbdbd" /></svg></button>
        <button aria-label="Chat" className={cell}><svg width="24" height="23" viewBox="0 0 24 23"><path d="M0 22l1-6A11 11 0 1112 22z" fill="#6b5fc7" /><rect x="5" y="7" width="10" height="9" rx="1.500" fill="#fff" /><path d="M16 10l3-2v7l-3-2z" fill="#fff" /></svg></button>
        <button aria-label="File Explorer" className={cell}><svg width="24" height="22" viewBox="0 0 24 22"><path d="M0 0h8l2 3H0z" fill="#d99a0a" /><path d="M0 4h9l2-2h13v19H0z" fill="#fbc93a" /><path d="M4 21v-5q0-2 2-2h12q2 0 2 2v5z" fill="#1277c9" /><path d="M8 18h8" stroke="#0a4f8f" strokeWidth="1.500" /></svg></button>
        <button aria-label="Opera" className={cell}><svg width="23" height="23" viewBox="0 0 23 23"><defs><linearGradient id="o" x2="1"><stop stopColor="#ff1b2d" /><stop offset=".6" stopColor="#c40d1e" /><stop offset="1" stopColor="#ff5a5a" /></linearGradient></defs><path fillRule="evenodd" d="M11.500 0a11.500 11.500 0 100 23 11.500 11.500 0 000-23zm0 3.500c3 0 5 3.500 5 8s-2 8-5 8-5-3.500-5-8 2-8 5-8z" fill="url(#o)" /></svg><i className="absolute bottom-0 h-[3px] w-1.5 rounded-full bg-[#7b8c8e]" /></button>
        <button aria-label="TradingView" className={cell}><svg width="24" height="24" viewBox="0 0 24 24"><path d="M0 0h24v24H0z" fill="#131722" /><path d="M2 7h8v10H6v-6H2z" fill="#fff" /><circle cx="12.500" cy="9" r="2" fill="#fff" /><path d="M17 7h4.500l-4 10H13z" fill="#fff" /></svg></button>
        <button aria-label="FTMO MT4" className={cell + " bg-[#e4f7f7]"}><FtmoIcon s={24} /><i className="absolute bottom-0 h-[3px] w-4 rounded-full bg-[#1f8a9a]" /></button>
      </nav>
      <div className="flex flex-1 items-center justify-end gap-2 pr-5">
        <button aria-label="Hidden icons"><svg width="12" height="8" viewBox="0 0 12 8" fill="none" stroke="#222" strokeWidth="1.300"><path d="M1 7l5-6 5 6" /></svg></button>
        <button aria-label="Network and sound" className="ml-1.5 flex items-center gap-2">
          <svg width="16" height="12" viewBox="0 0 16 12" fill="none" stroke="#222" strokeWidth="1.200"><path d="M1 4.500q7-7 14 0M3.500 7q4.500-4.500 9 0M5.500 9q2.500-2.500 5 0" /><circle cx="8" cy="10.500" r="1.200" fill="#222" stroke="none" /></svg>
          <svg width="15" height="12" viewBox="0 0 15 12" fill="none" stroke="#222" strokeWidth="1.100"><path d="M1 4h2l4-3v10L3 8H1zM9 4q1.500 2 0 4M11 2.500q3 3.500 0 7M13 1q4 5 0 10" /></svg>
          <svg width="17" height="12" viewBox="0 0 17 12" fill="none" stroke="#222" strokeWidth="1.200"><rect x="4" y="2" width="11" height="9" rx="1.500" /><path d="M6 4h6v5H6zM0 1h5v4H0z" fill="#222" stroke="none" /><path d="M1.500 0v2M4 0v2M2.500 5v5M16.400 5v3" /></svg>
        </button>
        <p className="ml-1.5 text-right">11:00 PM<br />8/20/2022</p>
        <span className="flex size-4 items-center justify-center rounded-full bg-[#1f7f90] text-[10px] text-white">5</span>
      </div>
    </footer>
  );
}

const STATUS: [string, string][] = [["Default", "w-[116px]"], ["2022.08.16 04:30", "w-[102px]"], ["O: 0.66401", "w-[71px]"], ["H: 0.66501", "w-[71px]"], ["L: 0.66400", "w-[68px]"], ["C: 0.66501", "w-[70px]"], ["V: 5727", "w-[67px]"]];

export default function App() {
  return (
    <div className="flex h-screen flex-col overflow-hidden bg-[linear-gradient(#86a5b0_0,#9db9bf_150px,#cdb7ad_175px,#b39a90_420px,#5b5a3c_450px,#7d5f50_600px,#4a4538_700px,#1c2a38_780px,#0d1518_800px,#5f7a68_860px,#1d4030_950px,#3f6050_1032px)] font-['Roboto','Open_Sans',sans-serif] text-black">
      <div className="ml-2 mt-px flex min-h-0 flex-1 flex-col overflow-hidden rounded-tl-lg bg-[#f0f0f0]">
        <header className="flex h-[30px] shrink-0 items-center bg-white pl-2">
          <FtmoIcon s={16} />
          <h1 className="ml-[5px] text-[12px]">1300308680: FTMO-Server2 - Demo Account - FTMO S.R.O. - [AUDCHF,M3 (offline)]</h1>
          <div className="ml-auto flex">
            {["M0 6h10", "M1.500 1.500h8v8h-8z", "M0.500 0.500l10 10M10.500 0.500l-10 10"].map((d, i) => (
              <button key={d} aria-label={["Minimize", "Maximize", "Close"][i]} className={i === 2 ? "flex w-[38px] justify-start pl-[17px]" : "flex w-[45px] justify-center"}>
                <svg width="11" height="11" viewBox="0 0 11 11" fill="none" stroke="#000"><path d={d} /></svg>
              </button>
            ))}
          </div>
        </header>
        <nav className="flex h-[21px] shrink-0 items-center gap-px border-b border-[#a0a0a0] pl-1">
          <svg width="15" height="15" viewBox="0 0 15 15" fill="none" stroke="#5b8fd8" aria-hidden="true"><rect x=".5" y="1.500" width="10" height="8" fill="#fff" /><path d="M1 3h9" /><rect x="4.500" y="5.500" width="10" height="8" fill="#fff" /><path d="M5 7h9M6 11l2-2 1 3 2-3 1 2" /></svg>
          {["File", "View", "Insert", "Charts", "Tools", "Window", "Help"].map((m) => (
            <button key={m} className="px-2 text-[12px] leading-4">{m}</button>
          ))}
          <div className="ml-auto flex gap-1">
            {["M3 8h6v2H3z", "M1 4h7v6H1zM2 6v3h5V6zM4 1h7v6H9V3H4z", "M2 2l3 3 3-3 1 1-3 3 3 3-1 1-3-3-3 3-1-1 3-3-3-3z"].map((d, i) => (
              <button key={d} aria-label={["Minimize chart", "Restore chart", "Close chart"][i]} className={(i === 2 ? "w-[10px] justify-start pl-1 " : "w-4 justify-center ") + "flex h-4 items-center overflow-hidden border-y border-[#e6e6e6] bg-white"}>
                <svg width="11" height="11" viewBox="0 0 11 11" fill="#7b8a9a" fillRule="evenodd" className="shrink-0"><path d={d} /></svg>
              </button>
            ))}
          </div>
        </nav>
        <div className="flex h-[27px] shrink-0 items-center border-t border-white">
          <div className="flex h-full items-center border-b border-r border-[#a0a0a0]">
            <Grip />
            <Tool icon="newchart" name="New chart" drop />
            <Tool icon="profiles" name="Profiles" drop />
            <Sep />
            <Tool icon="market" name="Market watch" />
            <Tool icon="cross" name="Data window" />
            <Tool icon="navigator" name="Navigator" />
            <Tool icon="terminal" name="Terminal" />
            <Tool icon="tester" name="Strategy tester" />
            <Sep />
            <Tool icon="order" name="New Order" text="New Order" />
            <Tool icon="gold" name="MetaEditor" />
            <Tool icon="community" name="Community" />
            <Tool icon="signal" name="Signals" />
            <Tool icon="auto" name="AutoTrading" text="AutoTrading" />
          </div>
          <div className="flex h-full items-center border-b border-r border-[#a0a0a0] pl-px">
            <Grip />
            <Tool icon="bars" name="Bar chart" active />
            <Tool icon="candles" name="Candlesticks" />
            <Tool icon="line" name="Line chart" />
            <Sep />
            <Tool icon="zin" name="Zoom in" />
            <Tool icon="zout" name="Zoom out" />
            <Tool icon="tile" name="Tile windows" />
            <Sep wide />
            <Tool icon="scroll" name="Auto scroll" />
            <Tool icon="shift" name="Chart shift" active />
            <Sep wide />
            <Tool icon="indic" name="Indicators" drop />
            <Tool icon="clock" name="Periods" drop />
            <Tool icon="tmpl" name="Templates" drop />
          </div>
          <div className="ml-auto flex items-center gap-3">
            <button aria-label="Search"><svg width="14" height="14" viewBox="0 0 14 14" fill="none" stroke="#2f6fd6"><circle cx="8.500" cy="5" r="4" strokeWidth="1.500" /><path d="M5.500 8L1 12.500" strokeWidth="2.500" /></svg></button>
            <button aria-label="Messages"><svg width="19" height="15" viewBox="0 0 19 15" fill="#f4f4f6" stroke="#8a8a8f"><path d="M8 5q0-4 7-4h6v9h-3v2l-2-2q-8 0-8-5z" /><path d="M1 8.500q0-3.500 5-3.500t5 3.500-5 3.500l-3 2v-2.500q-2-1-2-3z" /></svg></button>
          </div>
        </div>
        <div className="flex h-[26px] shrink-0">
          <div className="flex h-full items-center border-r border-[#a0a0a0]">
            <Grip />
            <Tool icon="cursor" name="Cursor" active />
            <Tool icon="cross2" name="Crosshair" />
            <Sep />
            <Tool icon="vline" name="Vertical line" />
            <Tool icon="hline" name="Horizontal line" />
            <Tool icon="trend" name="Trendline" />
            <Tool icon="chan" name="Equidistant channel" />
            <Tool icon="fibo" name="Fibonacci" />
            <Tool icon="texta" name="Text" />
            <Tool icon="label" name="Text label" />
            <Tool icon="shapes" name="Arrows" drop />
          </div>
          <div className="flex h-full items-center border-r border-[#a0a0a0] pl-px">
            <Grip />
            {["M1", "M5", "M15", "M30", "H1", "H4", "D1", "W1", "MN"].map((p) => (
              <button key={p} className="w-7 text-center text-[10px] text-[#a8a8a8]">{p}</button>
            ))}
          </div>
        </div>

        <main className="flex min-h-0 flex-1 flex-col border-l-2 border-t-2 border-[#7a7a7a] bg-black pl-[2px] pt-[2px] font-['Noto_Sans','Open_Sans',sans-serif] text-[9px] leading-[10px] text-white">
          <div className="flex min-h-0 flex-1">
            <div className="relative min-w-0 flex-1 overflow-hidden border border-white">
              <MainPlot />
              <div className="absolute left-1 top-[2px] leading-[13px]">
                <p className="flex items-center gap-[5px] text-[10px]"><svg width="7" height="4" aria-hidden="true"><path d="M0 0h7L3.500 4z" fill="#fff" /></svg>AUDCHF,M3</p>
                <p>pipdiffCurrent = 0</p>
              </div>
              <div className="absolute right-1 top-[2px] flex flex-col items-end">
                <p className="flex items-center gap-px leading-[13px]">Trade Assistant MT4<svg width="13" height="13" viewBox="0 0 13 13" fill="none" stroke="#fff"><circle cx="6.500" cy="6.500" r="5.500" /><path d="M4 9.500q2.500-2.500 5 0M4 5h1M8 5h1" /></svg></p>
                <p className="mr-[3px] flex items-center gap-[3px] font-['Liberation_Sans',Arial,sans-serif] text-[13px] leading-[15px] text-[#00bfff]">No more news this week<svg width="15" height="14" viewBox="0 0 15 14"><circle cx="7.500" cy="7" r="6" fill="#003a55" stroke="#0af" /><path d="M3 3q4-3 7 0l-1 4-4 1-3-2zM9 9l4-2-2 5-3 1z" fill="#00bfff" /></svg></p>
              </div>
              <TradePanel />
              <p className="absolute bottom-1.5 left-[54px] whitespace-nowrap font-[Impact,'Roboto',sans-serif] text-[27px] font-black leading-8 text-[#ff00ff]">hours / stops / news / auto / battery</p>
            </div>
            <div className="relative -mb-[2px] flex w-[39px] shrink-0 flex-col justify-between pt-1">
              {PRICES.map((p, i) => (
                <span key={i} className="flex h-[10px] items-center gap-[2px] before:h-px before:w-[3px] before:bg-white">{p}</span>
              ))}
              <div className="absolute inset-x-0 top-[498px] pl-px">
                <div className="h-1 overflow-hidden bg-[#00ff00] pl-1 leading-[10px] text-black">0.65915</div>
                <div className="bg-white pl-1 leading-[11px] text-black">0.65898</div>
              </div>
            </div>
          </div>
          <div className="mt-[2px] flex h-[150px] shrink-0">
            <div className="relative min-w-0 flex-1 overflow-hidden border border-white">
              <RsiPlot />
              <p className="absolute left-2 top-[3px]">vkw bands of RSI (25,3,25,5) 51.4202 40.2506 45.8354 42.8539</p>
            </div>
            <div className="flex w-[39px] shrink-0 flex-col justify-between py-[2px] pl-[3px]"><span>72.9008</span><span>25.2126</span></div>
          </div>
          <div className="flex h-[20px] shrink-0">
            {DATES.map((d) => (
              <span key={d} className="relative w-16 shrink-0 whitespace-nowrap pt-1 before:absolute before:left-[1px] before:top-0 before:h-[3px] before:w-px before:bg-white">{d}</span>
            ))}
          </div>
        </main>

        <div className="mt-[2px] flex h-5 shrink-0 items-start border-t border-black text-[12px] leading-[18px] text-[#6d6d6d]">
          <button className="w-[102px] pl-1 text-center">AUDUSD,M15</button>
          <button className="mt-[2px] w-24 border-l border-[#808080] text-center leading-[14px]">AUDCHF,M15</button>
          <button className="w-[136px] border border-t-0 border-black bg-white text-black">AUDCHF,M3 (offline)</button>
          <div className="ml-auto mt-1.5 flex gap-4 pr-[2px]">
            <svg width="5" height="8" aria-hidden="true"><path d="M4 0v8L0 4z" fill="#888" /></svg>
            <svg width="5" height="8" aria-hidden="true"><path d="M0 0v8l4-4z" fill="#888" /></svg>
          </div>
        </div>
        <div className="flex h-[15px] shrink-0 items-start overflow-hidden border-t border-white text-[12px] leading-[24px]">
          <span className="flex-1 pl-[2px]">For Help, press F1</span>
          {STATUS.map(([t, w]) => (
            <span key={t} className={"mt-[3px] shrink-0 border-l border-[#a0a0a0] pl-[5px] leading-[18px] " + w}>{t}</span>
          ))}
          <span className="mt-[3px] flex w-[140px] shrink-0 gap-1 border-l border-[#a0a0a0] pl-1 leading-[18px]">
            <svg width="24" height="12" className="mt-[2px]" aria-hidden="true"><path d="M0 0h2v12H0zM3 0h2v12H3zM6 0h2v11H6zM9 0h2v10H9zM12 0h2v8h-2zM15 0h2v7h-2zM18 0h2v6h-2zM21 0h2v4h-2z" fill="#6b8000" /><path d="M6 10h2v2H6zM9 9h2v3H9zM12 7h2v5h-2zM15 6h2v6h-2zM18 5h2v7h-2zM21 3h2v9h-2z" fill="#0a3a50" /></svg>
            154/2 kb
          </span>
        </div>
      </div>
      <Taskbar />
    </div>
  );
}
